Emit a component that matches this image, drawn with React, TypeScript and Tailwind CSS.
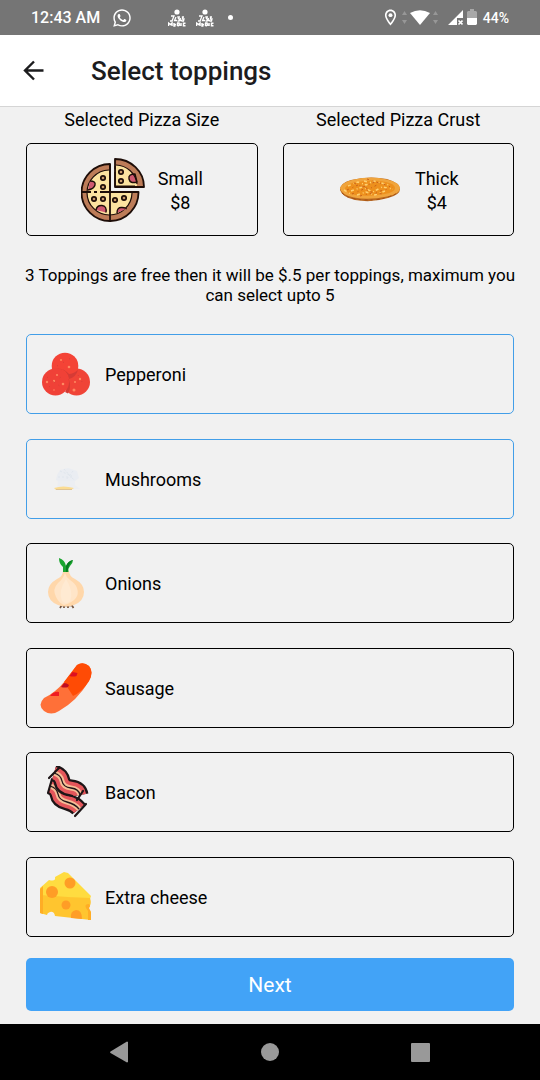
import { useState } from "react";
import type { ReactNode } from "react";
import { FaWhatsapp } from "react-icons/fa";
import { MdOutlineLocationOn } from "react-icons/md";

function BackArrow() {
  return (
    <svg width="24" height="24" viewBox="0 0 24 24" fill="none" stroke="#1c1c1e" strokeWidth="2.400" aria-hidden="true">
      <path d="M22.500 11.500H4M13 2.500L4 11.500l9 9" />
    </svg>
  );
}

function AppBadge() {
  return (
    <svg width="18" height="18" viewBox="0 0 18 18" fill="none" stroke="#fff" aria-hidden="true">
      <circle cx="9" cy="3" r="2.600" fill="#fff" stroke="none" />
      <path strokeWidth="1.300" d="M3 7h3L4 12H2M8 8L6.500 11.500H9M12 8h-2l.5 1.800h1.500L11 12H9.500M12.500 9l-.5 2.500h2M16 8h-1.500v2h1.500l-.5 2h-2" />
      <path strokeWidth="1.500" d="M.5 17v-3l2 1.500L4 14v3M6 14v3h1.500M6 15.500h2M9.500 14v3M9 14h2l.5 2-2 1M13 14v3M17.500 14.300h-2v2.400h2" />
    </svg>
  );
}

function SignalIcons() {
  return (
    <>
      <svg width="36" height="18" viewBox="0 0 36 18" fill="#fff" aria-hidden="true">
        <path d="M8 4Q18-1.500 28 4L18 16z" />
        <path fill="#979797" d="M0 6l2.500-4L5 6zM0 11h5l-2.500 4zM31 6l2.500-4L36 6zM31 11h5l-2.500 4z" />
      </svg>
      <svg className="ml-2.5" width="15" height="16" viewBox="0 0 15 16" aria-hidden="true">
        <path fill="#fff" d="M0 15L15 0v8H9v7z" />
        <path stroke="#fff" strokeWidth="1.600" d="M10.500 10.500l4 4M14.500 10.500l-4 4" />
      </svg>
      <svg className="ml-1" width="10" height="17" viewBox="0 0 10 17" aria-hidden="true">
        <path fill="#a8a8a8" d="M3 0h4v2h2l1 1v6H0V3l1-1h2z" />
        <path fill="#fff" d="M0 9h10v6l-1 1H1l-1-1z" />
      </svg>
    </>
  );
}

function PizzaIcon() {
  const olives = [[22, 20], [22, 29], [13, 41], [22, 41], [34, 42], [43, 40], [40, 14], [40, 23]];
  return (
    <svg width="64" height="64" viewBox="0 0 64 64" fill="none" stroke="#1d0d08" strokeWidth="1.800" strokeLinejoin="round" aria-hidden="true">
      <path fill="#bd7c58" d="M29 6A28.500 28.500 0 1 0 57.500 34H29z" />
      <path fill="#fce3a0" stroke="none" d="M28 12A22.500 22.500 0 1 0 51 35H28z" />
      <path d="M28 12A22.500 22.500 0 1 0 51 35" strokeWidth="1.200" />
      <path fill="#cf5870" d="M9 23q6 0 5 4t-7 5M15 52q1-5 6-4.500t4 7M36 55q0-6 5-5.500T45 51" strokeWidth="1.400" />
      <path d="M29 6v56M1 34h9M13 34h3M19 34h38" strokeWidth="1.800" />
      <path fill="#bd7c58" d="M34 1v28h29A29 28 0 0 0 34 1z" />
      <path fill="#fce3a0" stroke="none" d="M35 7v21h21A22 21 0 0 0 35 7z" />
      <path fill="#cf5870" d="M54 16q-7 0-6 5t8 3z" strokeWidth="1.400" />
      <path d="M34 8v3M34 14v14h20M35 7A22 21 0 0 1 56 26" strokeWidth="1.200" />
      {olives.map(([x, y]) => (
        <circle key={`${x}-${y}`} cx={x} cy={y} r="2.200" strokeWidth="1.700" fill="#c99a6c" />
      ))}
    </svg>
  );
}

function CrustIcon() {
  return (
    <svg width="64" height="28" viewBox="0 0 64 28" fill="none" aria-hidden="true">
      <path fill="#b9681f" d="M2 14Q2 7 13 4 31-.5 49 3q13 4 13 10 0 6-12 9-16 5-33 2Q4 21 2 14z" />
      <path fill="#f0a43c" d="M2 12Q4 6 16 3.500q17-4 33 0 13 3 13 8.500 0 6-13 8.500-18 4-33 1Q3 19 2 12z" />
      <path fill="#ed901d" d="M7 12Q10 7 19 6q16-3 29 0 9 2 9 6 0 4-10 6-15 3-29 1-10-1-11-7z" />
      <path stroke="#ffd070" strokeWidth="1.500" strokeDasharray="3 3 1 2" d="M10 10l10-4 8 3 8-4 15 4M13 15l11-4 11 5 9-5 11 2M19 19l9-3 9 3 10-4M26 5l9 2M6 14l7 4" />
      <path stroke="#c9601a" strokeDasharray="2 4 1 3" d="M9 14l11-5 11 4 12-6 12 5M16 7l9 4 12-5M14 18l12-5 10 4 13-4M22 20l12-3 13 1M29 3l12 4" />
      <path stroke="#a34f15" strokeDasharray="3 3 2 4" d="M4 17q5 5 14 6 17 3 32-2 7-2 10-5" />
    </svg>
  );
}

function PepperoniIcon() {
  return (
    <svg width="52" height="52" viewBox="0 0 52 52" aria-hidden="true">
      <circle cx="36.500" cy="34" r="13.500" fill="#f04437" />
      <path fill="#d23b34" d="M25 27q5 11 0 17l3 1.500Q33 37 26 24z" />
      <circle cx="25" cy="18" r="13.300" fill="#f44336" />
      <path fill="#d63b35" d="M12.500 22q14-4 16.500 9 7-2 9-9-5 4-9 4-7-8-16.500-4z" />
      <circle cx="15.500" cy="34" r="13.500" fill="#f04137" />
      <g fill="#ff8861">
        <circle cx="21" cy="12" r="1" /><circle cx="29" cy="19" r="1.300" />
        <circle cx="7" cy="34" r="1.200" /><circle cx="14" cy="33" r="1.200" />
        <circle cx="17" cy="27" r="1.100" /><circle cx="23" cy="36" r="1.300" />
        <circle cx="40" cy="31" r="1.200" /><circle cx="34" cy="42" r="1.500" />
        <circle cx="35" cy="34" r="1" /><circle cx="14" cy="42" r=".8" />
      </g>
      <path fill="none" stroke="#d63e37" strokeDasharray="1 6" d="M17 18l14-8M7 29l17 12M38 27l6 10M9 39l12-10" />
    </svg>
  );
}

function MushroomIcon() {
  return (
    <svg width="52" height="52" viewBox="0 0 52 52" aria-hidden="true">
      <path fill="#eaedf2" d="M17 22l3-5 8-2 9 3 2 7-5 4H20l-4-2z" />
      <path fill="none" stroke="#e0e6ed" strokeDasharray="2 2" d="M20 18l12 5M18 24h16M24 16l10 11M33 18l-7 9" />
      <path fill="#eceef2" d="M18 28h17v4l5 4H17z" />
      <path fill="#fbdc93" d="M14 35q9-3 20 0l-3 2H16z" />
      <path fill="#dfc495" d="M16 36h16v1H16z" />
    </svg>
  );
}

function OnionIcon() {
  return (
    <svg width="52" height="52" viewBox="0 0 52 52" aria-hidden="true">
      <path stroke="#72513b" strokeWidth="1.700" fill="none" d="M20 51l1.500-2.500H32l1.500 2.500M24 48.500V51M28 48.500V51" />
      <path fill="#ffd7aa" d="M23 14h6q0 5 6 8 9 5 9 13 0 9-10 13-8 3-16 0-10-4-10-13 0-8 9-13 6-3 6-8z" />
      <path fill="#ffe5c8" d="M25 16q-2 6-7 10-6 6-2 14 3 6 8 8 17-5 13-17-2-5-7-8-4-3-5-7z" />
      <path fill="#ffead2" d="M26 22q-8 12-4 22 4 4 8 0 4-9-4-22z" />
      <path fill="#1aa52f" d="M23 15V10q-4-3-4-9 6 2 7 8 2-5 7-6 0 3-3 6-2 2-1.500 6z" />
      <path fill="#087a20" d="M26 9q2-5 7-6-5 4-5.500 12H26z" />
    </svg>
  );
}

function SausageIcon() {
  return (
    <svg width="52" height="52" viewBox="0 0 52 52" aria-hidden="true">
      <path fill="#ff7038" d="M4 36Q15 31 25 19L37 3q6-4 12 1 5 6 0 15Q37 39 19 49q-8 5-15 0-7-6 0-13z" />
      <path fill="#ff4b05" d="M24 20L37 3q6-4 12 1 5 6 0 15-7 11-16 15z" />
      <path fill="#ef1c22" d="M10 34q4-5 9-4v4z" />
      <path fill="#c00d22" d="M21 25l3-4q3 0 5 2l-1 2q-3 1-7 0z" />
      <path fill="#dd1022" d="M29.500 14l3-4 5 1-1 3q-3 1-7 0z" />
    </svg>
  );
}

function BaconStrip({ center, ends }: { center: string; ends: string }) {
  return (
    <>
      <path stroke="#1d1517" strokeWidth="17" d={center} />
      <path stroke="#e4565b" strokeWidth="12.500" d={center} />
      <path stroke="#f6bd96" strokeWidth="5" d={center} />
      <path stroke="#1d1517" strokeWidth="1.300" d={center} />
      <path stroke="#1d1517" strokeWidth="2.200" strokeLinecap="round" d={ends} />
    </>
  );
}

function BaconIcon() {
  return (
    <svg width="52" height="52" viewBox="0 0 52 52" fill="none" aria-hidden="true">
      <BaconStrip center="M10 20Q17 22 18 28T27 36T39 43" ends="M8 27L12 13M35 50L46 38" />
      <BaconStrip center="M14 7Q21 9 22 15T31 22T40 29" ends="M9 12L19 2M37 34L43 25" />
    </svg>
  );
}

function CheeseIcon() {
  return (
    <svg width="52" height="52" viewBox="0 0 52 52" aria-hidden="true">
      <path fill="#ffdc40" d="M0 25V17l9-8q7 2 6-3L24 1l4 1 23 23-1 3z" />
      <path fill="#ffc52f" d="M0 24l28 2 22 1q2 6-1 9-2 3 2 5v8l-36-4q-1-5-5-4-3 1-3 3l-7-2z" />
      <path fill="#ffad25" d="M0 24V18l3-3v28l-3-1zM46 37q-2-4 3-4 2 2 0 4l2 4v8h-3V40z" />
      <g fill="#ff9d26">
        <circle cx="12" cy="21" r="6" />
        <circle cx="30" cy="12" r="5.500" />
        <circle cx="26" cy="34" r="4.500" />
        <path d="M31 47q-1-7 5-8 6 0 6 9z" />
      </g>
    </svg>
  );
}

const toppings = [
  { name: "Pepperoni", icon: <PepperoniIcon /> },
  { name: "Mushrooms", icon: <MushroomIcon /> },
  { name: "Onions", icon: <OnionIcon /> },
  { name: "Sausage", icon: <SausageIcon /> },
  { name: "Bacon", icon: <BaconIcon /> },
  { name: "Extra cheese", icon: <CheeseIcon /> },
];

function Choice({ title, name, price, icon }: { title: string; name: string; price: string; icon: ReactNode }) {
  return (
    <section className="flex flex-1 flex-col">
      <h2 className="text-center text-lg leading-[26px]">{title}</h2>
      <div className="mt-2.5 flex h-[93px] items-center justify-center gap-[13px] rounded-[5px] border border-black">
        {icon}
        <p className="pt-0.5 text-center text-lg leading-6">
          {name}
          <br />
          {price}
        </p>
      </div>
    </section>
  );
}

export default function App() {
  const [selected, setSelected] = useState(["Pepperoni", "Mushrooms"]);
  const toggle = (name: string) =>
    setSelected((current) =>
      current.includes(name) ? current.filter((item) => item !== name) : current.length < 5 ? [...current, name] : current,
    );

  return (
    <div className="flex min-h-screen flex-col bg-[#f1f1f1] font-['Roboto',sans-serif] text-black">
      <div className="flex h-[35px] items-center bg-[#757575] px-[31px] font-medium text-white">
        <span className="text-base">12:43 AM</span>
        <FaWhatsapp className="ml-3" size={20} />
        <div className="ml-9 flex items-center gap-2.5">
          <AppBadge />
          <AppBadge />
          <span className="ml-1 size-[5px] rounded-full bg-white" />
        </div>
        <div className="ml-auto flex items-center">
          <MdOutlineLocationOn className="mr-0.5" size={19} />
          <SignalIcons />
          <span className="ml-1.5 text-sm">44%</span>
        </div>
      </div>

      <header className="flex h-[72px] items-center gap-[46px] border-b border-[#d5d5d5] bg-white px-[21px]">
        <button type="button" aria-label="Back">
          <BackArrow />
        </button>
        <h1 className="text-[26px] leading-8 font-medium text-[#1c1c1e]">Select toppings</h1>
      </header>

      <main className="flex flex-1 flex-col px-[26px] pb-[13px]">
        <div className="flex gap-[25px]">
          <Choice title="Selected Pizza Size" name="Small" price="$8" icon={<PizzaIcon />} />
          <Choice title="Selected Pizza Crust" name="Thick" price="$4" icon={<CrustIcon />} />
        </div>

        <p className="-mx-2 mt-[29px] text-center text-[17px] leading-5">
          3 Toppings are free then it will be $.5 per toppings, maximum you
          <br />
          can select upto 5
        </p>

        <div className="mt-[29px] flex flex-1 flex-col justify-between">
          {toppings.map(({ name, icon }) => (
            <label
              key={name}
              className="relative flex h-20 cursor-pointer items-center gap-[13px] rounded-[5px] border border-black px-[13px] text-lg has-checked:border-[#429ee8]"
            >
              <input type="checkbox" className="sr-only" checked={selected.includes(name)} onChange={() => toggle(name)} />
              {icon}
              <span className="pt-0.5">{name}</span>
            </label>
          ))}
        </div>

        <button type="button" className="mt-[21px] h-[53px] rounded-[5px] bg-[#42a3f7] pt-0.5 text-[21px] text-white">
          Next
        </button>
      </main>

      <nav className="grid h-14 grid-cols-3 items-center bg-black px-11" aria-label="System">
        <button type="button" aria-label="System back" className="flex justify-center">
          <svg width="20" height="22" viewBox="0 0 20 22" fill="#999" aria-hidden="true">
            <path d="M1.500 10.500L18 .5l1 .5v20l-1 .5L1.500 12q-1-.8 0-1.500z" />
          </svg>
        </button>
        <button type="button" aria-label="Home" className="flex justify-center">
          <span className="size-[18px] rounded-full bg-[#999]" />
        </button>
        <button type="button" aria-label="Recent apps" className="flex justify-center">
          <span className="size-[19px] rounded-[1px] bg-[#999]" />
        </button>
      </nav>
    </div>
  );
}
